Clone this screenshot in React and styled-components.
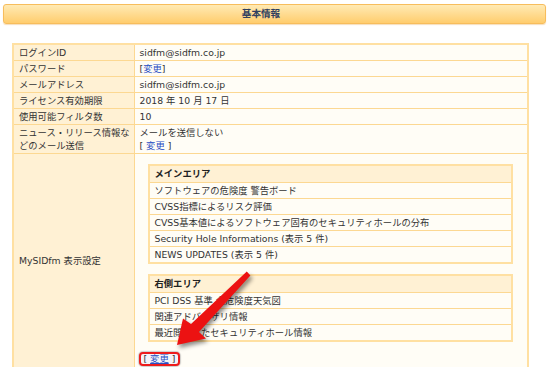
import styled, { createGlobalStyle } from "styled-components";

const Global = createGlobalStyle`
  html, body {
    margin: 0;
    background: #ffffff;
  }
  body {
    font-family: "DejaVu Sans", "Noto Sans CJK JP", sans-serif;
    font-size: 9.3px;
    color: #333333;
  }
`;

const Page = styled.div`
  position: relative;
  width: 550px;
  height: 367px;
  padding-top: 4px;
  box-sizing: border-box;
  overflow: hidden;
`;

//1. orange title bar
const TitleBar = styled.div`
  margin: 0 4px 0 3px;
  height: 20px;
  box-sizing: border-box;
  padding-right: 27px;
  border: 1px solid #f7bd5c;
  border-radius: 3px;
  background: linear-gradient(#ffeab4, #ffcd6e);
  box-shadow: 0 1px 1px rgba(230, 160, 60, 0.35);
  text-align: center;
  line-height: 18px;
  font-weight: bold;
  font-size: 9.6px;
  color: #2f4060;
`;

//2. main table
const InfoTable = styled.table`
  margin: 19px 0 0 12px;
  width: 517px;
  table-layout: fixed;
  border-collapse: collapse;
  border: 2px solid #ffe0a2;
  background: #fffdf6;

  td {
    border: 1px solid #fcd892;
    padding: 1px 5px;
    line-height: 13px;
    text-align: left;
    vertical-align: top;
  }
`;

const LabelCol = styled.col`
  width: 121px;
`;

const Label = styled.td`
  background: #fff1d4;
  word-break: break-all;
  padding: 1px 0 1px 5px !important;
  vertical-align: ${(p) => (p.$middle ? "middle" : "top")} !important;
`;

const Link = styled.a`
  color: #2a4fc4;
  text-decoration: ${(p) => (p.$underline ? "underline" : "none")};
  cursor: pointer;
`;

const SettingsCell = styled.td`
  padding: 10px 5px 1px 4px !important;
`;

//3. inner lists in the MySIDfm cell
const AreaTable = styled.table`
  margin: 0 15px 10px 9px;
  width: 365px;
  border-collapse: collapse;
  border: 2px solid #ffe0a2;

  th,
  td {
    border: 1px solid #fcd892 !important;
    padding: 1px 5px 1px 5px !important;
    line-height: 13px !important;
    text-align: left;
    font-weight: normal;
  }
  th {
    background: #fff1d4;
    font-weight: bold;
    color: #222222;
    line-height: 14px !important;
  }
`;

const EditRow = styled.div`
  height: 14px;
  display: flex;
  align-items: center;
`;

const Highlight = styled.span`
  display: inline-flex;
  align-items: center;
  height: 14px;
  box-sizing: border-box;
  padding: 0 3px;
  border: 2px solid #ee1c1c;
  border-radius: 4px;
  background: #f3f4f8;
  box-shadow: 0 0 1px 1px rgba(120, 120, 120, 0.35);
  line-height: 10px;
  color: #333;
  white-space: pre;
`;

const Arrow = styled.svg`
  position: absolute;
  left: 0;
  top: 0;
  width: 550px;
  height: 367px;
  pointer-events: none;
  filter: drop-shadow(2px 3px 2px rgba(0, 0, 0, 0.45));
`;

const Edit = ({ spaced }) => (
  <>
    [{spaced ? " " : ""}
    <Link>変更</Link>
    {spaced ? " " : ""}]
  </>
);

const mainArea = [
  "ソフトウェアの危険度 警告ボード",
  "CVSS指標によるリスク評価",
  "CVSS基本値によるソフトウェア固有のセキュリティホールの分布",
  "Security Hole Informations (表示 5 件)",
  "NEWS UPDATES (表示 5 件)",
];

const sideArea = [
  "PCI DSS 基準 全危険度天気図",
  "関連アドバイザリ情報",
  "最近閲覧したセキュリティホール情報",
];

export default function App() {
  return (
    <Page>
      <Global />
      <TitleBar>基本情報</TitleBar>
      <InfoTable>
        <colgroup>
          <LabelCol />
          <col />
        </colgroup>
        <tbody>
          <tr>
            <Label>ログインID</Label>
            <td>sidfm@sidfm.co.jp</td>
          </tr>
          <tr>
            <Label>パスワード</Label>
            <td>
              <Edit />
            </td>
          </tr>
          <tr>
            <Label>メールアドレス</Label>
            <td>sidfm@sidfm.co.jp</td>
          </tr>
          <tr>
            <Label>ライセンス有効期限</Label>
            <td>2018 年 10 月 17 日</td>
          </tr>
          <tr>
            <Label>使用可能フィルタ数</Label>
            <td>10</td>
          </tr>
          <tr>
            <Label>ニュース・リリース情報などのメール送信</Label>
            <td>
              メールを送信しない
              <br />
              <Edit spaced />
            </td>
          </tr>
          <tr>
            <Label $middle>MySIDfm 表示設定</Label>
            <SettingsCell>
              <AreaTable>
                <thead>
                  <tr>
                    <th>メインエリア</th>
                  </tr>
                </thead>
                <tbody>
                  {mainArea.map((t) => (
                    <tr key={t}>
                      <td>{t}</td>
                    </tr>
                  ))}
                </tbody>
              </AreaTable>
              <AreaTable>
                <thead>
                  <tr>
                    <th>右側エリア</th>
                  </tr>
                </thead>
                <tbody>
                  {sideArea.map((t) => (
                    <tr key={t}>
                      <td>{t}</td>
                    </tr>
                  ))}
                </tbody>
              </AreaTable>
              <EditRow>
                <Highlight>
                  [ <Link $underline>変更</Link> ]
                </Highlight>
              </EditRow>
            </SettingsCell>
          </tr>
        </tbody>
      </InfoTable>
      <Arrow viewBox="0 0 550 367">
        <polygon
          points="246.8,271.6 191,324 183,318.5 177,345 206,338.5 199,332 250.4,275.4"
          fill="#ec1212"
        />
      </Arrow>
    </Page>
  );
}
